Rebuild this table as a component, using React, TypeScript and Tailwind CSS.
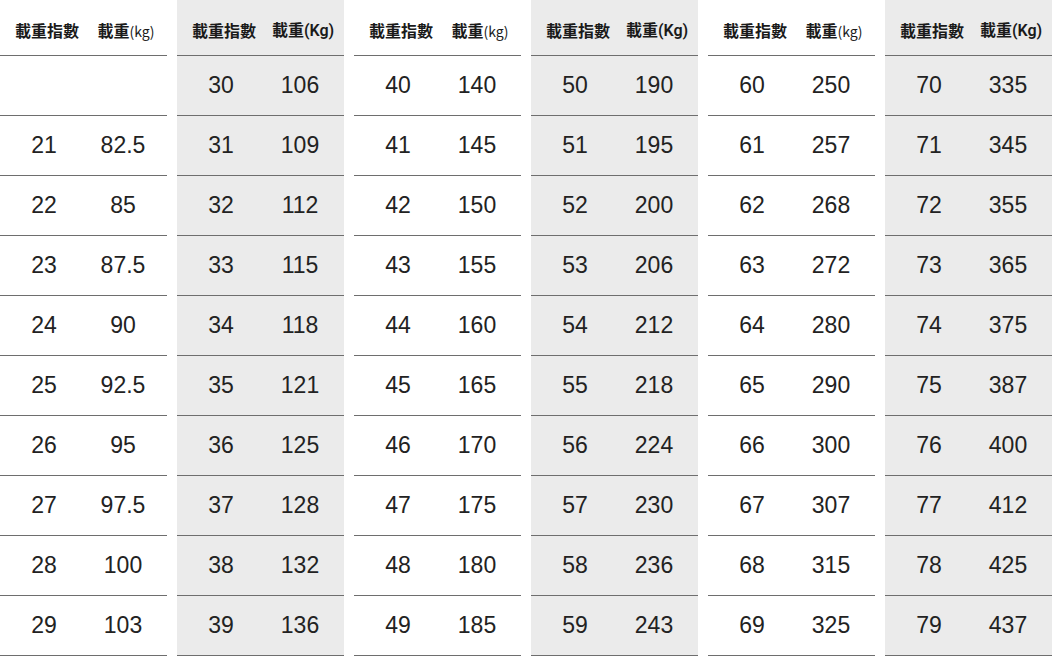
const tables: { start: number; gray: boolean; bigUnit: boolean }[] = [
  { start: 20, gray: false, bigUnit: false },
  { start: 30, gray: true, bigUnit: true },
  { start: 40, gray: false, bigUnit: false },
  { start: 50, gray: true, bigUnit: true },
  { start: 60, gray: false, bigUnit: false },
  { start: 70, gray: true, bigUnit: true },
];

const loads: Record<number, string> = {
  21: '82.5', 22: '85', 23: '87.5', 24: '90', 25: '92.5', 26: '95', 27: '97.5', 28: '100', 29: '103',
  30: '106', 31: '109', 32: '112', 33: '115', 34: '118', 35: '121', 36: '125', 37: '128', 38: '132', 39: '136',
  40: '140', 41: '145', 42: '150', 43: '155', 44: '160', 45: '165', 46: '170', 47: '175', 48: '180', 49: '185',
  50: '190', 51: '195', 52: '200', 53: '206', 54: '212', 55: '218', 56: '224', 57: '230', 58: '236', 59: '243',
  60: '250', 61: '257', 62: '268', 63: '272', 64: '280', 65: '290', 66: '300', 67: '307', 68: '315', 69: '325',
  70: '335', 71: '345', 72: '355', 73: '365', 74: '375', 75: '387', 76: '400', 77: '412', 78: '425', 79: '437',
};

function LoadTable({ start, gray, bigUnit }: { start: number; gray: boolean; bigUnit: boolean }) {
  const rows = Array.from({ length: 10 }, (_, i) => start + i);
  return (
    <div className={`w-[167px] ${gray ? 'bg-[#ebebeb]' : 'bg-white'}`}>
      <div
        className="grid grid-cols-[94px_66px] h-[56px] border-b border-[#6e6e6e] items-center pt-[5px] text-[16px] font-semibold text-[#1a1a1a] whitespace-nowrap"
        style={{ fontFamily: '"Noto Sans CJK TC", "Noto Sans", sans-serif' }}
      >
        <div className="text-center">載重指數</div>
        <div className="text-center -ml-[2px]">
          載重
          {bigUnit ? (
            <span className="font-[Roboto] font-semibold">(Kg)</span>
          ) : (
            <span className="text-[14px] font-normal">(kg)</span>
          )}
        </div>
      </div>
      {rows.map((n) => (
        <div
          key={n}
          className="grid grid-cols-[88px_70px] h-[60px] border-b border-[#6e6e6e] items-center text-[23px] text-[#222] font-['Liberation_Sans',Arial,sans-serif]"
        >
          <div className="text-center">{loads[n] ? n : ''}</div>
          <div className="text-center">{loads[n] ?? ''}</div>
        </div>
      ))}
    </div>
  );
}

export default function App() {
  return (
    <div className="w-[1052px] h-[656px] overflow-hidden bg-white flex gap-[10px]">
      {tables.map((t) => (
        <LoadTable key={t.start} {...t} />
      ))}
    </div>
  );
}
